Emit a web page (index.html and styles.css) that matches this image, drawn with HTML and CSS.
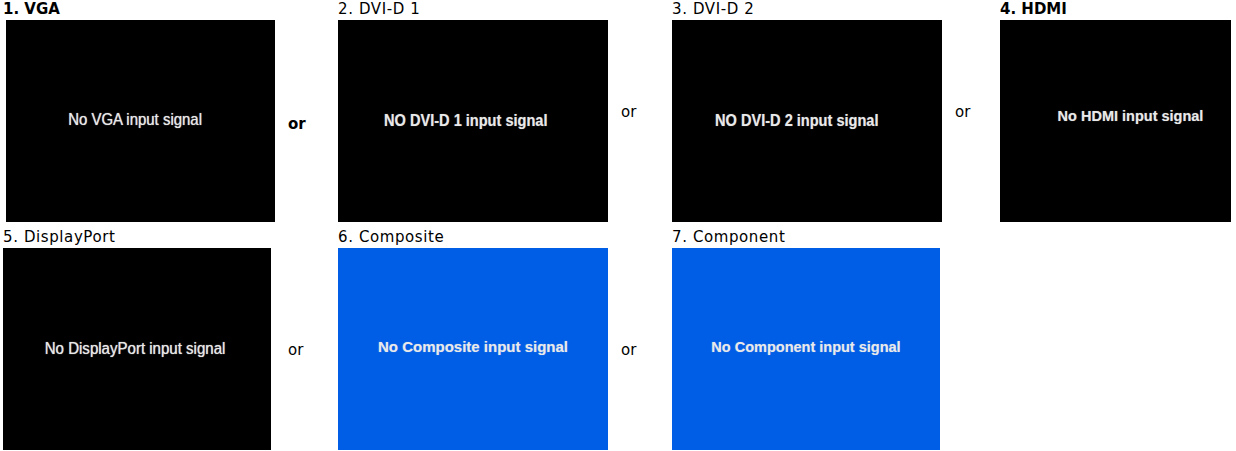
FILE: index.html
```html
<!DOCTYPE html>
<html lang="en">
<head>
    <meta charset="UTF-8">
    <title>No input signal</title>
    <link rel="stylesheet" href="styles.css">
</head>
<body>
    <div class="inputs">
        <div class="panel">
            <div class="label label--bold">1. VGA</div>
            <div class="screen screen--vga"><span class="msg msg--thin msg--vga">No VGA input signal</span></div>
        </div>
        <div class="or or--bold">or</div>
        <div class="panel">
            <div class="label">2. DVI-D 1</div>
            <div class="screen screen--dvi1"><span class="msg msg--dvi">NO DVI-D 1 input signal</span></div>
        </div>
        <div class="or or--high">or</div>
        <div class="panel">
            <div class="label">3. DVI-D 2</div>
            <div class="screen screen--dvi2"><span class="msg msg--dvi">NO DVI-D 2 input signal</span></div>
        </div>
        <div class="or or--high">or</div>
        <div class="panel">
            <div class="label label--bold">4. HDMI</div>
            <div class="screen screen--hdmi"><span class="msg msg--hdmi">No HDMI input signal</span></div>
        </div>

        <div class="panel">
            <div class="label">5. DisplayPort</div>
            <div class="screen screen--dp"><span class="msg msg--thin msg--dp">No DisplayPort input signal</span></div>
        </div>
        <div class="or or--low">or</div>
        <div class="panel">
            <div class="label">6. Composite</div>
            <div class="screen screen--blue screen--composite"><span class="msg msg--composite">No Composite input signal</span></div>
        </div>
        <div class="or or--low">or</div>
        <div class="panel">
            <div class="label">7. Component</div>
            <div class="screen screen--blue screen--component"><span class="msg msg--component">No Component input signal</span></div>
        </div>
    </div>
</body>
</html>
```

FILE: styles.css
```css
body {
    margin: 0;
    padding: 0;
    background: #fff;
    color: #000;
    font-family: "DejaVu Sans", Verdana, sans-serif;
    font-size: 15px;
}
.inputs {
    display: grid;
    grid-template-columns: 272px 63px 270px 64px 270px 58px 232px;
    row-gap: 6px;
    padding-left: 3px;
}
.panel {
    display: flex;
    flex-direction: column;
}
.label {
    height: 20px;
    line-height: 18px;
    letter-spacing: 0.6px;
    white-space: nowrap;
}
.label--bold {
    font-weight: bold;
    letter-spacing: 0;
}
.screen {
    width: 270px;
    height: 202px;
    background: #000;
    display: flex;
    align-items: center;
    justify-content: center;
    box-sizing: border-box;
}
.screen--blue {
    background: #005ee6;
}
.screen--vga {
    width: 269px;
    margin-left: 3px;
    padding-right: 10px;
    padding-bottom: 3px;
}
.screen--dvi1 {
    padding-right: 14px;
}
.screen--dvi2 {
    padding-right: 20px;
}
.screen--hdmi {
    width: 231px;
    padding-left: 30px;
    padding-bottom: 10px;
}
.screen--dp {
    width: 268px;
    padding-right: 4px;
}
.screen--composite {
    padding-bottom: 5px;
}
.screen--component {
    width: 268px;
    padding-bottom: 5px;
}
.msg {
    display: inline-block;
    white-space: nowrap;
    font-family: "Liberation Sans", Arial, sans-serif;
    font-weight: bold;
    color: #e9e9e9;
    text-shadow: 0 0 1px rgba(255, 255, 255, 0.45);
}
.msg--thin {
    font-weight: normal;
    text-shadow: 0 0 1px rgba(255, 255, 255, 0.8);
}
.msg--vga {
    font-size: 17px;
    transform: scaleX(0.88);
}
.msg--dp {
    font-size: 16px;
    transform: scaleX(0.94);
}
.msg--dvi {
    font-size: 16px;
    transform: scaleX(0.91);
}
.msg--hdmi {
    font-size: 14.5px;
}
.msg--composite {
    font-size: 15px;
}
.msg--component {
    font-size: 14.5px;
}
.or {
    display: flex;
    align-items: center;
    padding-top: 20px;
    padding-left: 13px;
}
.or--bold {
    font-weight: bold;
    padding-top: 26px;
}
.or--high {
    padding-top: 2px;
}
.or--low {
    padding-top: 22px;
}
```
